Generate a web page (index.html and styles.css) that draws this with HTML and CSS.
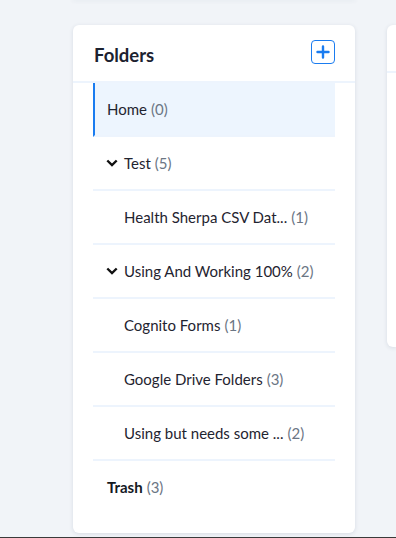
FILE: index.html
```html
<!DOCTYPE html>
<html>
<head>
<meta charset="utf-8">
<link rel="stylesheet" href="styles.css">
</head>
<body>
<div class="page">
  <div class="above"></div>
  <div class="columns">
    <section class="card folders">
      <header class="card-head">
        <h2 class="title">Folders</h2>
        <button class="add-btn" aria-label="Add folder">
          <svg width="14" height="14" viewBox="0 0 14 14"><path d="M7 1.5V12.5M1.5 7H12.5" stroke="#1a7cf0" stroke-width="2.4" stroke-linecap="round" fill="none"/></svg>
        </button>
      </header>
      <ul class="list">
        <li class="row active"><span class="name">Home</span><span class="count">(0)</span></li>
        <li class="row parent"><svg class="chev" width="12" height="8" viewBox="0 0 12 8"><path d="M1.3 1.5L6 6L10.7 1.5" stroke="#111" stroke-width="2.4" fill="none"/></svg><span class="name">Test</span><span class="count">(5)</span></li>
        <li class="row child"><span class="name">Health Sherpa CSV Dat...</span><span class="count">(1)</span></li>
        <li class="row parent"><svg class="chev" width="12" height="8" viewBox="0 0 12 8"><path d="M1.3 1.5L6 6L10.7 1.5" stroke="#111" stroke-width="2.4" fill="none"/></svg><span class="name">Using And Working 100%</span><span class="count">(2)</span></li>
        <li class="row child"><span class="name">Cognito Forms</span><span class="count">(1)</span></li>
        <li class="row child"><span class="name">Google Drive Folders</span><span class="count">(3)</span></li>
        <li class="row child"><span class="name">Using but needs some ...</span><span class="count">(2)</span></li>
        <li class="row trash"><span class="name">Trash</span><span class="count">(3)</span></li>
      </ul>
    </section>
    <section class="card side">
      <div class="side-head"></div>
    </section>
  </div>
  <div class="bottom-edge"></div>
</div>
</body>
</html>
```

FILE: styles.css
```css
html, body {
  margin: 0;
  padding: 0;
}
body {
  background: #f1f4f8;
  font-family: Lato, "Liberation Sans", sans-serif;
  color: #1f2430;
}
.page {
  height: 538px;
  display: flex;
  flex-direction: column;
  overflow: hidden;
}
.above {
  height: 0;
  margin: 0 41px 25px 73px;
  box-shadow: 0 0 4px 1px rgba(30, 50, 80, 0.07);
}
.columns {
  flex: 1;
  display: flex;
  gap: 32px;
  padding-left: 73px;
  padding-bottom: 4px;
  min-height: 0;
}
.card {
  background: #fff;
  border-radius: 6px;
  box-shadow: 0 1px 4px rgba(30, 50, 80, 0.12);
}
.folders {
  width: 282px;
  flex-shrink: 0;
  padding-bottom: 18px;
  box-sizing: border-box;
}
.card-head {
  box-sizing: border-box;
  height: 58px;
  border-bottom: 2px solid #edf4fd;
  display: flex;
  justify-content: space-between;
  align-items: flex-start;
  padding: 15px 20px 0 21px;
}
.title {
  margin: 3px 0 0;
  font-size: 18.5px;
  line-height: 24px;
  font-weight: 700;
  color: #1c2230;
}
.add-btn {
  width: 24px;
  height: 24px;
  padding: 0;
  border: 1.5px solid #1a7cf0;
  border-radius: 4px;
  background: #fff;
  display: flex;
  align-items: center;
  justify-content: center;
}
.list {
  list-style: none;
  margin: 0 20px;
  padding: 0;
}
.row {
  height: 52px;
  border-bottom: 2px solid #edf4fd;
  display: flex;
  align-items: center;
  padding-left: 14px;
  font-size: 15px;
  white-space: nowrap;
}
.row .count {
  color: #6b7684;
  margin-left: 4px;
}
.row.active {
  background: #edf5fe;
  border-left: 2px solid #1a7cf0;
  padding-left: 12px;
}
.row.parent {
  padding-left: 13px;
}
.chev {
  margin-right: 6px;
  margin-top: 0;
}
.row.child {
  padding-left: 31px;
}
.row.trash {
  border-bottom: none;
}
.row.trash .name {
  font-weight: 700;
  color: #15191f;
}
.side {
  flex: 1;
  height: 322px;
  border-top-right-radius: 0;
  border-bottom-right-radius: 0;
}
.side-head {
  height: 46px;
  border-bottom: 2px solid #edf4fd;
}
.bottom-edge {
  height: 1px;
  background: #3a3a3a;
}
```
